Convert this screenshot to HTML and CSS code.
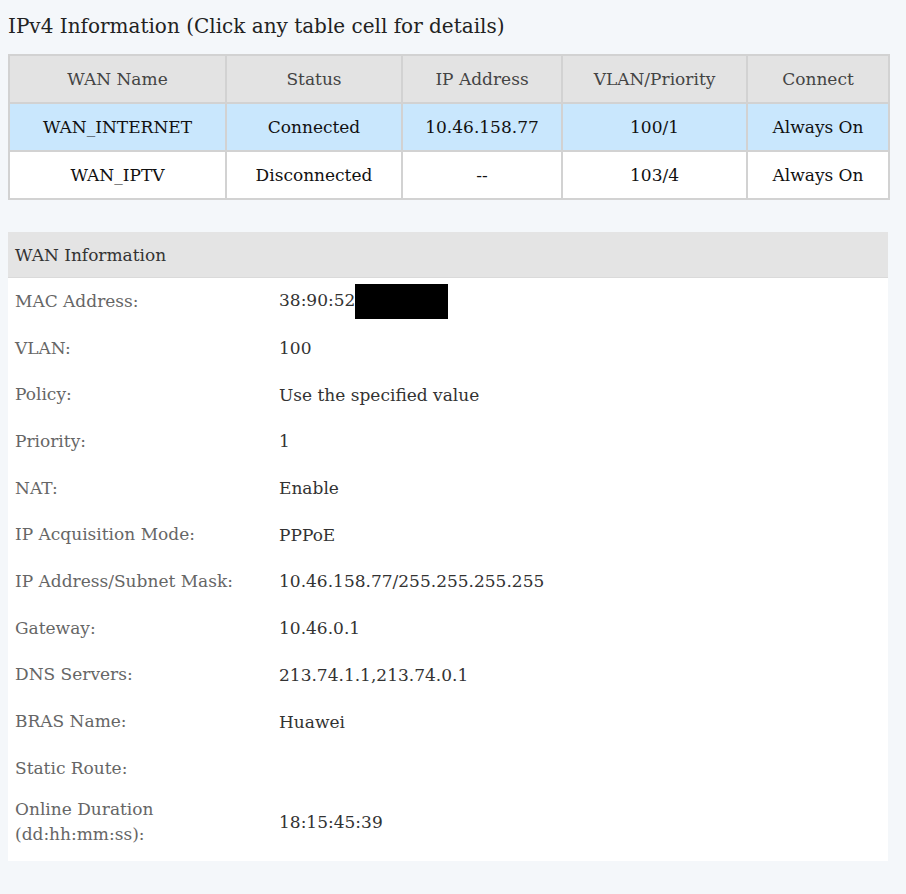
FILE: index.html
```html
<!DOCTYPE html>
<html lang="en">
<head>
    <meta charset="UTF-8">
    <title>IPv4 Information</title>
    <link rel="stylesheet" href="styles.css">
</head>
<body>
    <h1 class="page-title">IPv4 Information (Click any table cell for details)</h1>

    <table class="wan-table">
        <colgroup>
            <col class="col-name">
            <col class="col-status">
            <col class="col-ip">
            <col class="col-vlan">
            <col class="col-connect">
        </colgroup>
        <thead>
            <tr>
                <th>WAN Name</th>
                <th>Status</th>
                <th>IP Address</th>
                <th>VLAN/Priority</th>
                <th>Connect</th>
            </tr>
        </thead>
        <tbody>
            <tr class="selected">
                <td>WAN_INTERNET</td>
                <td>Connected</td>
                <td>10.46.158.77</td>
                <td>100/1</td>
                <td>Always On</td>
            </tr>
            <tr>
                <td>WAN_IPTV</td>
                <td>Disconnected</td>
                <td>--</td>
                <td>103/4</td>
                <td>Always On</td>
            </tr>
        </tbody>
    </table>

    <div class="info-panel">
        <div class="info-title">WAN Information</div>
        <div class="info-row">
            <div class="info-label">MAC Address:</div>
            <div class="info-value">38:90:52<span class="redacted"></span></div>
        </div>
        <div class="info-row">
            <div class="info-label">VLAN:</div>
            <div class="info-value">100</div>
        </div>
        <div class="info-row">
            <div class="info-label">Policy:</div>
            <div class="info-value">Use the specified value</div>
        </div>
        <div class="info-row">
            <div class="info-label">Priority:</div>
            <div class="info-value">1</div>
        </div>
        <div class="info-row">
            <div class="info-label">NAT:</div>
            <div class="info-value">Enable</div>
        </div>
        <div class="info-row">
            <div class="info-label">IP Acquisition Mode:</div>
            <div class="info-value">PPPoE</div>
        </div>
        <div class="info-row">
            <div class="info-label">IP Address/Subnet Mask:</div>
            <div class="info-value">10.46.158.77/255.255.255.255</div>
        </div>
        <div class="info-row">
            <div class="info-label">Gateway:</div>
            <div class="info-value">10.46.0.1</div>
        </div>
        <div class="info-row">
            <div class="info-label">DNS Servers:</div>
            <div class="info-value">213.74.1.1,213.74.0.1</div>
        </div>
        <div class="info-row">
            <div class="info-label">BRAS Name:</div>
            <div class="info-value">Huawei</div>
        </div>
        <div class="info-row">
            <div class="info-label">Static Route:</div>
            <div class="info-value"></div>
        </div>
        <div class="info-row tall">
            <div class="info-label">Online Duration<br>(dd:hh:mm:ss):</div>
            <div class="info-value">18:15:45:39</div>
        </div>
    </div>
</body>
</html>
```

FILE: styles.css
```css
body {
    margin: 8px;
    font-family: 'DejaVu Serif', 'Liberation Serif', serif;
    background: #f4f7fa;
    color: #222;
}

.page-title {
    margin: 0 0 10px;
    font-size: 20px;
    font-weight: normal;
    line-height: 36px;
    color: #222;
}

.wan-table {
    width: 880px;
    border-collapse: collapse;
    border: 2px solid #cfcfcf;
    background: #fff;
    font-size: 17px;
    table-layout: fixed;
}

.col-name { width: 217px; }
.col-status { width: 176px; }
.col-ip { width: 160px; }
.col-vlan { width: 185px; }
.col-connect { width: 142px; }

.wan-table th,
.wan-table td {
    height: 46px;
    padding: 0;
    text-align: center;
    border: 2px solid #d2d2d2;
}

.wan-table th {
    background: #e3e3e3;
    font-weight: normal;
    color: #444;
}

.wan-table td {
    color: #111;
}

.wan-table tr.selected td {
    background: #c9e7fd;
}

.info-panel {
    margin-top: 32px;
    width: 880px;
    background: #fff;
    padding-bottom: 8px;
    font-size: 17px;
}

.info-title {
    height: 45px;
    line-height: 46px;
    padding-left: 7px;
    background: #e4e4e4;
    border-bottom: 1px solid #dadada;
    color: #333;
}

.info-row {
    display: flex;
    align-items: center;
    min-height: 46.7px;
}

.info-row.tall {
    min-height: 61px;
}

.info-label {
    width: 264px;
    padding-left: 7px;
    color: #666;
    line-height: 25px;
}

.info-value {
    color: #333;
}

.redacted {
    display: inline-block;
    width: 93px;
    height: 35px;
    background: #000;
    vertical-align: middle;
}
```
